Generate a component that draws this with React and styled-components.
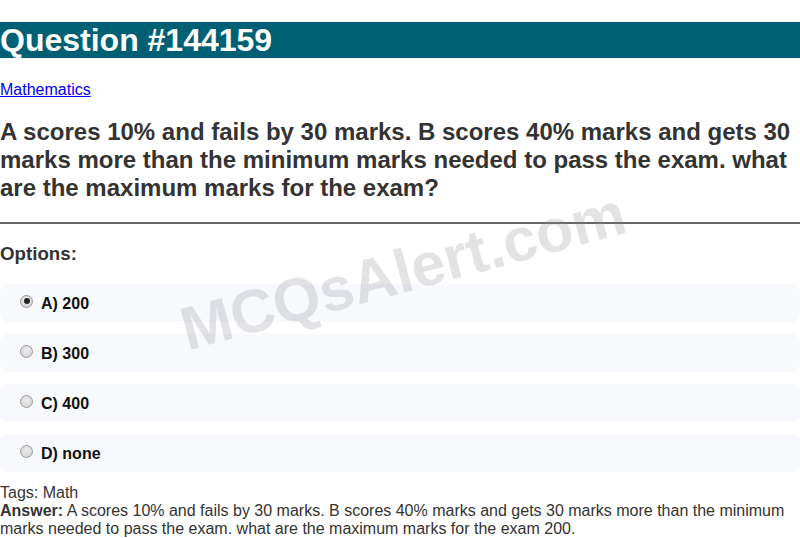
import React from "react";
import { styled, createGlobalStyle } from "styled-components";

const GlobalStyle = createGlobalStyle`
  html, body {
    margin: 0;
    padding: 0;
    background: #fff;
    font-family: "Liberation Sans", Arial, sans-serif;
    color: #333;
  }
`;

const Page = styled.div`
  position: relative;
  width: 800px;
  overflow: hidden;
`;

const Header = styled.h1`
  margin: 22px 0 21.44px;
  background: #006073;
  color: #fff;
  font-size: 32px;
  font-weight: bold;
  line-height: 36.4px;
`;

const Category = styled.div`
  font-size: 16px;
  line-height: 18.4px;
  padding-top: 1px;

  a {
    color: #0000ee;
    text-decoration: underline;
  }
`;

const QuestionText = styled.h2`
  margin: 18.92px 0 19.92px;
  font-size: 24px;
  line-height: 28px;
  font-weight: bold;
  color: #333;
`;

const Divider = styled.hr`
  margin: 19.92px 0 0;
  border: none;
  border-top: 2px solid #666;
  height: 0;
`;

const OptionsTitle = styled.h3`
  margin: 18.72px 0 19.5px;
  font-size: 18.72px;
  line-height: 21.5px;
  font-weight: bold;
`;

const OptionList = styled.div`
  display: flex;
  flex-direction: column;
  gap: 12px;
  margin-bottom: 12px;
`;

const OptionCard = styled.label`
  display: flex;
  align-items: center;
  height: 38px;
  padding: 2px 0 0 20px;
  box-sizing: border-box;
  background: #f8f9fc;
  border-radius: 8px;
  font-size: 16px;
  font-weight: bold;
  color: #111;
`;

const Radio = styled.input`
  appearance: none;
  -webkit-appearance: none;
  width: 13px;
  height: 13px;
  margin: -5px 8px 0 0;
  border-radius: 50%;
  border: 1px solid #9a9a9a;
  box-sizing: border-box;
  background: radial-gradient(circle at 50% 40%, #ededed 0%, #cfcfcf 100%);
  position: relative;

  &:checked::after {
    content: "";
    position: absolute;
    left: 50%;
    top: 50%;
    width: 6px;
    height: 6px;
    border-radius: 50%;
    background: #222;
    transform: translate(-50%, -50%);
  }
`;

const Tags = styled.div`
  font-size: 16px;
  line-height: 18px;
`;

const Answer = styled.div`
  font-size: 16px;
  line-height: 18px;

  b {
    font-weight: bold;
  }
`;

const Watermark = styled.div`
  position: absolute;
  left: 403px;
  top: 271px;
  transform: translate(-50%, -50%) rotate(-15deg);
  font-size: 61px;
  font-weight: bold;
  color: rgba(140, 140, 150, 0.24);
  white-space: nowrap;
  pointer-events: none;
`;

const options = ["A) 200", "B) 300", "C) 400", "D) none"];

const question =
  "A scores 10% and fails by 30 marks. B scores 40% marks and gets 30 marks more than the minimum marks needed to pass the exam. what are the maximum marks for the exam";

export default function App() {
  return (
    <>
      <GlobalStyle />
      <Page>
        <Header>Question #144159</Header>
        <Category>
          <a href="#">Mathematics</a>
        </Category>
        <QuestionText>{question}?</QuestionText>
        <Divider />
        <OptionsTitle>Options:</OptionsTitle>
        <OptionList>
          {options.map((opt, idx) => (
            <OptionCard key={idx}>
              <Radio type="radio" name="opt" defaultChecked={idx === 0} />
              {opt}
            </OptionCard>
          ))}
        </OptionList>
        <Tags>Tags: Math</Tags>
        <Answer>
          <b>Answer:</b> {question} 200.
        </Answer>
        <Watermark>MCQsAlert.com</Watermark>
      </Page>
    </>
  );
}
